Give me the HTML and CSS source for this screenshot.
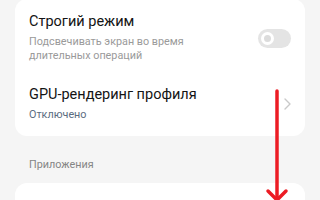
FILE: index.html
```html
<!DOCTYPE html>
<html lang="ru">
<head>
<meta charset="utf-8">
<link rel="stylesheet" href="styles.css">
</head>
<body>
<div class="page">
  <div class="card card-first">
    <div class="row">
      <div class="text">
        <div class="title">Строгий режим</div>
        <div class="sub">Подсвечивать экран во время<br>длительных операций</div>
      </div>
      <div class="toggle"><span class="knob"></span></div>
    </div>
    <div class="row">
      <div class="text">
        <div class="title">GPU-рендеринг профиля</div>
        <div class="sub value">Отключено</div>
      </div>
      <svg class="chev" width="7" height="12" viewBox="0 0 7 12"><path d="M1 1l5 5-5 5" fill="none" stroke="#c9c9c9" stroke-width="1.4" stroke-linecap="round" stroke-linejoin="round"/></svg>
    </div>
  </div>
  <div class="section">Приложения</div>
  <div class="card card-next"></div>
</div>
<svg class="arrow" width="24" height="120" viewBox="0 0 24 120"><path d="M12 2V108" stroke="#ec1c24" stroke-width="3.5" stroke-linecap="round"/><path d="M3 102l9 9 9-9" fill="none" stroke="#ec1c24" stroke-width="3.5" stroke-linecap="round" stroke-linejoin="round"/></svg>
</body>
</html>
```
FILE: styles.css
```css
html, body {
  margin: 0;
  padding: 0;
  width: 320px;
  height: 200px;
  overflow: hidden;
  background: #f5f5f5;
  font-family: Roboto, "Noto Sans", sans-serif;
}
.page {
  padding: 0 15px;
}
.card {
  background: #ffffff;
  border-radius: 12px;
  padding: 3px 14px;
}
.card-first {
  margin-top: -1px;
}
.row {
  display: flex;
  align-items: center;
  padding: 11px 0;
}
.text {
  flex: 1;
}
.title {
  font-size: 14.5px;
  line-height: 18px;
  color: #141414;
  margin-bottom: 4px;
}
.sub {
  font-size: 10.8px;
  line-height: 14.3px;
  color: #9a9a9a;
}
.value {
  color: #5b6c80;
}
.toggle {
  width: 33px;
  height: 19px;
  border-radius: 10px;
  background: #e4e4e4;
  display: flex;
  align-items: center;
  padding-left: 3px;
  box-sizing: border-box;
}
.knob {
  width: 13px;
  height: 13px;
  border-radius: 50%;
  box-sizing: border-box;
  border: 3px solid #ffffff;
  background: #dcdcdc;
}
.section {
  font-size: 10.8px;
  line-height: 14px;
  color: #858585;
  padding: 22px 14px 11px;
}
.card-next {
  height: 40px;
}
.arrow {
  position: absolute;
  left: 265px;
  top: 89px;
}
```
